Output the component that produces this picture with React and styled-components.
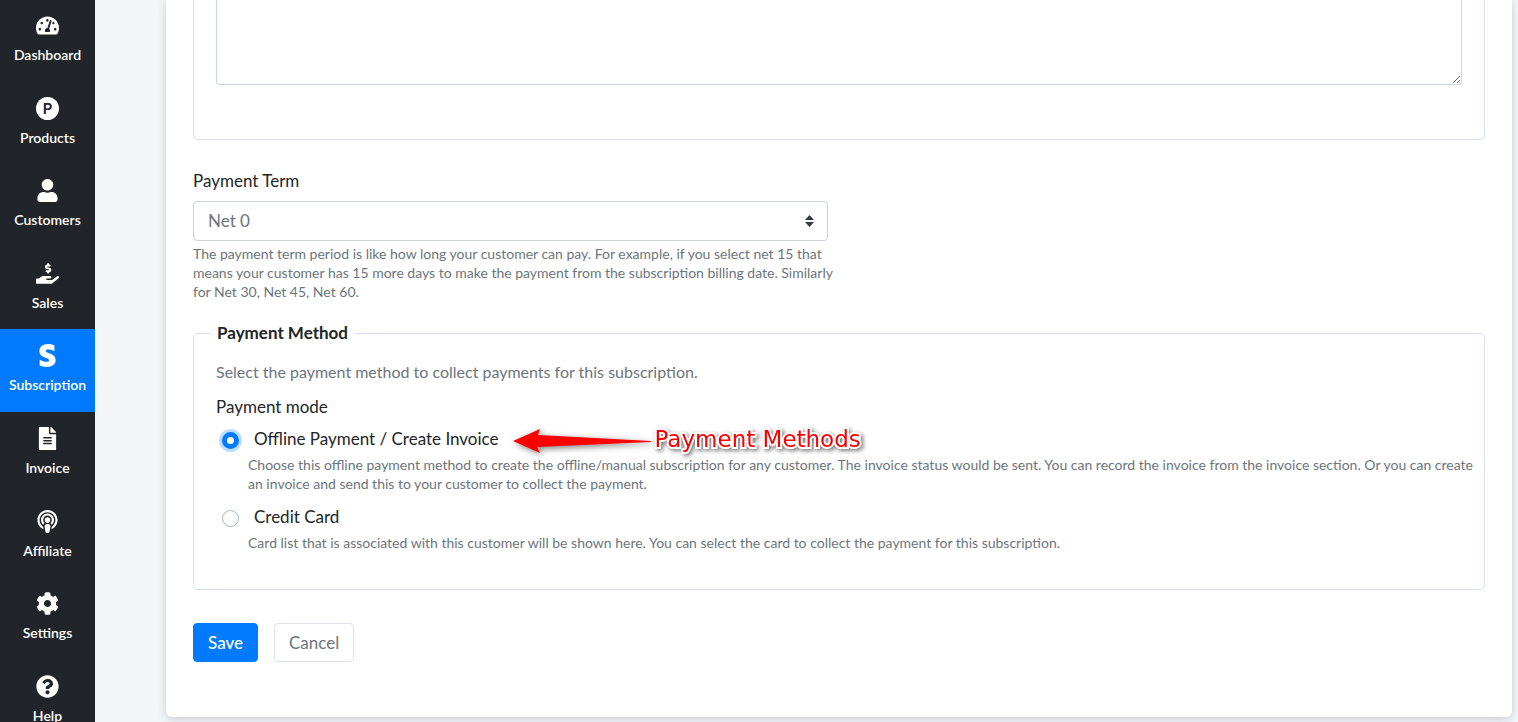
import React, { useState } from "react";
import styled, { createGlobalStyle } from "styled-components";
import {
  FaTachometerAlt,
  FaUser,
  FaHandHoldingUsd,
  FaStripeS,
  FaFileAlt,
  FaPodcast,
  FaCog,
  FaQuestionCircle,
} from "react-icons/fa";

const Global = createGlobalStyle`
  *, *::before, *::after { box-sizing: border-box; }
  body {
    margin: 0;
    background: #f2f6f9;
    color: #212529;
    font-family: Lato, "Liberation Sans", sans-serif;
    font-size: 17px;
    line-height: 24px;
  }
  button, select, textarea, input { font: inherit; }
`;

const Shell = styled.div`
  display: flex;
  height: 100vh;
  overflow: hidden;
`;

const Sidebar = styled.nav`
  flex: 0 0 95px;
  background: #212529;
  overflow: hidden;
`;

const NavList = styled.ul`
  list-style: none;
  margin: -1px 0 0;
  padding: 0;
`;

const NavLink = styled.a`
  display: flex;
  flex-direction: column;
  align-items: center;
  gap: 8px;
  padding: 15px 0 17px;
  color: #fff;
  background: ${(p) => (p.$active ? "#007bff" : "transparent")};
  font-size: 14px;
  font-weight: 600;
  line-height: 1.4;
  text-decoration: none;
  svg {
    display: block;
    height: 23px;
    width: auto;
  }
`;

const LetterBadge = styled.span`
  display: grid;
  place-items: center;
  width: 23px;
  height: 23px;
  border-radius: 50%;
  background: #fff;
  color: #212529;
  font-family: Inter, "Liberation Sans", sans-serif;
  font-size: 15px;
  font-weight: 600;
  line-height: 23px;
`;

const Main = styled.main`
  flex: 1;
  min-width: 0;
  padding: 0 6px 5px 71px;
`;

const Card = styled.form`
  height: 100%;
  padding: 0 27px;
  background: #fff;
  border-radius: 0 0 6px 6px;
  box-shadow: 0 2px 8px rgba(33, 37, 41, 0.2);
`;

const NotesBox = styled.div`
  padding: 0 22px 54px;
  border: 1px solid #d5dff8;
  border-top: 0;
  border-radius: 0 0 5px 5px;
`;

const Notes = styled.textarea`
  display: block;
  width: 100%;
  height: 85px;
  border: 1px solid #ced4da;
  border-top: 0;
  border-radius: 0 0 4px 4px;
  background: #fff;
  resize: vertical;
  outline: 0;
`;

const Row = styled.div`
  display: grid;
  grid-template-columns: 1fr 1fr;
  column-gap: 22px;
  margin-top: 29px;
`;

const FieldLabel = styled.label`
  display: block;
  margin-bottom: 8px;
`;

const SelectWrap = styled.div`
  display: grid;
  align-items: center;
  & > * { grid-area: 1 / 1; }
  svg {
    justify-self: end;
    margin-right: 14px;
    pointer-events: none;
  }
`;

const Select = styled.select`
  appearance: none;
  width: 100%;
  height: 40px;
  padding: 0 14px;
  border: 1px solid #ced4da;
  border-radius: 4px;
  background: #fff;
  color: #6c757d;
`;

const Help = styled.p`
  margin: ${(p) => (p.$indent ? "4px -16px 0 32px" : "3px -16px 0 0")};
  color: #6c757d;
  font-size: 14px;
  line-height: 19px;
`;

const Fieldset = styled.fieldset`
  min-width: 0;
  margin: 20px 0 0;
  padding: 0 22px 37px;
  border: 1px solid #d5dff8;
  border-radius: 5px;
`;

const Legend = styled.legend`
  margin-left: -5px;
  padding: 0 6px;
  font-weight: 700;
`;

const Intro = styled.p`
  margin: 15px 0 11px;
  color: #6c757d;
  font-size: 16px;
`;

const GroupTitle = styled.div``;

const Option = styled.div`
  margin-top: ${(p) => (p.$first ? "8px" : "12px")};
`;

const OptionLine = styled.div`
  position: relative;
  display: flex;
  align-items: center;
  width: max-content;
  label { padding-left: 15px; }
`;

const Radio = styled.input`
  appearance: none;
  width: 17px;
  height: 17px;
  margin: 2px 0 0 6px;
  border: 1px solid #adb5bd;
  border-radius: 50%;
  background: #fff;
  &:checked {
    border: 5px solid #007bff;
    box-shadow: 0 0 0 3px #bfdeff;
  }
`;

const Callout = styled.span`
  position: absolute;
  left: 100%;
  top: 0;
  display: flex;
  align-items: flex-start;
  padding-left: 14px;
  gap: 4px;
  white-space: nowrap;
  color: #f00;
  font-family: "DejaVu Sans", sans-serif;
  font-size: 23px;
  line-height: 24px;
  svg {
    display: block;
    margin-top: 2px;
    overflow: visible;
    filter: drop-shadow(2px 2px 3px rgba(0, 0, 0, 0.5));
  }
`;

const CalloutText = styled.span`
  -webkit-text-stroke: 4px #fff;
  paint-order: stroke fill;
  filter: drop-shadow(2px 2px 2px rgba(0, 0, 0, 0.5));
`;

const Actions = styled.div`
  display: flex;
  gap: 16px;
  margin-top: 33px;
`;

const Button = styled.button`
  height: 39px;
  padding: 0 14px;
  border: 1px solid ${(p) => (p.$primary ? "#007bff" : "#dee2e6")};
  border-radius: 4px;
  background: ${(p) => (p.$primary ? "#007bff" : "#fff")};
  color: ${(p) => (p.$primary ? "#fff" : "#6c757d")};
  font-weight: ${(p) => (p.$primary ? 500 : 400)};
`;

const ProductsIcon = () => <LetterBadge aria-hidden="true">P</LetterBadge>;

const NAV = [
  ["Dashboard", FaTachometerAlt],
  ["Products", ProductsIcon],
  ["Customers", FaUser],
  ["Sales", FaHandHoldingUsd],
  ["Subscription", FaStripeS],
  ["Invoice", FaFileAlt],
  ["Affiliate", FaPodcast],
  ["Settings", FaCog],
  ["Help", FaQuestionCircle],
];

export default function App() {
  const [mode, setMode] = useState("offline");
  return (
    <>
      <Global />
      <Shell>
        <Sidebar aria-label="Main">
          <NavList>
            {NAV.map(([label, Icon]) => (
              <li key={label}>
                <NavLink href="#" $active={label === "Subscription"}>
                  <Icon aria-hidden="true" />
                  {label}
                </NavLink>
              </li>
            ))}
          </NavList>
        </Sidebar>
        <Main>
          <Card onSubmit={(e) => e.preventDefault()}>
            <NotesBox>
              <Notes aria-label="Notes" />
            </NotesBox>
            <Row>
              <div>
                <FieldLabel htmlFor="term">Payment Term</FieldLabel>
                <SelectWrap>
                  <Select id="term" defaultValue="0" aria-describedby="term-help">
                    <option value="0">Net 0</option>
                    <option value="15">Net 15</option>
                    <option value="30">Net 30</option>
                    <option value="45">Net 45</option>
                    <option value="60">Net 60</option>
                  </Select>
                  <svg width="9" height="12" viewBox="0 0 9 12" fill="#343a40" aria-hidden="true">
                    <path d="M4.5 0 9 5H0zM4.5 12 0 7h9z" />
                  </svg>
                </SelectWrap>
                <Help id="term-help">
                  The payment term period is like how long your customer can pay. For example, if you
                  select net 15 that means your customer has 15 more days to make the payment from the
                  subscription billing date. Similarly for Net 30, Net 45, Net 60.
                </Help>
              </div>
            </Row>
            <Fieldset>
              <Legend>Payment Method</Legend>
              <Intro>Select the payment method to collect payments for this subscription.</Intro>
              <GroupTitle id="mode-title">Payment mode</GroupTitle>
              <div role="radiogroup" aria-labelledby="mode-title">
                <Option $first>
                  <OptionLine>
                    <Radio
                      type="radio"
                      id="offline"
                      name="mode"
                      checked={mode === "offline"}
                      onChange={() => setMode("offline")}
                    />
                    <label htmlFor="offline">Offline Payment / Create Invoice</label>
                    <Callout>
                      <svg width="138" height="24" viewBox="0 0 138 24" fill="#f00" aria-hidden="true">
                        <path d="M0 12 27 0 25 6 138 12V13L24 18 27 24z" />
                      </svg>
                      <CalloutText>Payment Methods</CalloutText>
                    </Callout>
                  </OptionLine>
                  <Help $indent>
                    Choose this offline payment method to create the offline/manual subscription for any
                    customer. The invoice status would be sent. You can record the invoice from the invoice
                    section. Or you can create an invoice and send this to your customer to collect the
                    payment.
                  </Help>
                </Option>
                <Option>
                  <OptionLine>
                    <Radio
                      type="radio"
                      id="card"
                      name="mode"
                      checked={mode === "card"}
                      onChange={() => setMode("card")}
                    />
                    <label htmlFor="card">Credit Card</label>
                  </OptionLine>
                  <Help $indent>
                    Card list that is associated with this customer will be shown here. You can select the
                    card to collect the payment for this subscription.
                  </Help>
                </Option>
              </div>
            </Fieldset>
            <Actions>
              <Button type="submit" $primary>Save</Button>
              <Button type="button">Cancel</Button>
            </Actions>
          </Card>
        </Main>
      </Shell>
    </>
  );
}
